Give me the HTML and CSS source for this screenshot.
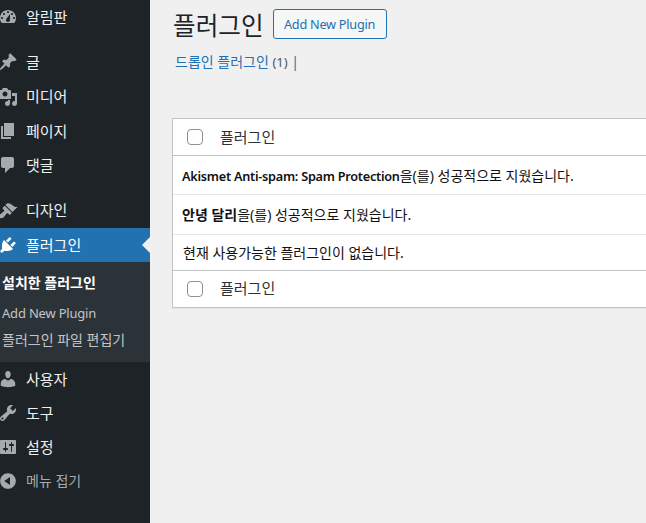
FILE: index.html
```html
<!DOCTYPE html>
<html lang="ko">
<head>
<meta charset="utf-8">
<title>플러그인</title>
<link rel="stylesheet" href="styles.css">
</head>
<body>
<div class="layout">
  <nav class="sidebar">
    <a class="item"><svg class="icon" viewBox="0 0 20 20"><path d="M3.76 16h12.48c1.1-1.37 1.76-3.11 1.76-5 0-4.42-3.58-8-8-8s-8 3.58-8 8c0 1.89.66 3.63 1.76 5zM10 4c.55 0 1 .45 1 1s-.45 1-1 1-1-.45-1-1 .45-1 1-1zM6 6c.55 0 1 .45 1 1s-.45 1-1 1-1-.45-1-1 .45-1 1-1zm8 0c.55 0 1 .45 1 1s-.45 1-1 1-1-.45-1-1 .45-1 1-1zm-5.37 5.55L12 7v6c0 1.1-.9 2-2 2s-2-.9-2-2c0-.57.24-1.08.63-1.45zM4 10c.55 0 1 .45 1 1s-.45 1-1 1-1-.45-1-1 .45-1 1-1zm12 0c.55 0 1 .45 1 1s-.45 1-1 1-1-.45-1-1 .45-1 1-1z"/></svg><span class="label">알림판</span></a>
    <div class="group">
      <a class="item"><svg class="icon" viewBox="0 0 20 20"><path d="M10.44 3.02l1.82-1.82 6.36 6.35-1.83 1.82c-1.05-.68-2.48-.57-3.41.36l-.75.75c-.92.93-1.04 2.35-.35 3.41l-1.83 1.82-2.41-2.41-2.8 2.79c-.42.42-3.38 2.71-3.8 2.29s1.86-3.39 2.28-3.81l2.79-2.79L4.1 9.36l1.83-1.82c1.05.69 2.48.57 3.4-.36l.75-.75c.93-.92 1.05-2.35.36-3.41z"/></svg><span class="label">글</span></a>
      <a class="item"><svg class="icon" viewBox="0 0 20 20"><path d="M13 11V4c0-.55-.45-1-1-1h-1.67L9 1H5L3.67 3H2c-.55 0-1 .45-1 1v7c0 .55.45 1 1 1h10c.55 0 1-.45 1-1zM7 4.5c1.38 0 2.5 1.12 2.5 2.5S8.38 9.5 7 9.5 4.5 8.38 4.5 7 5.62 4.5 7 4.5zM14 6h5v10.5c0 1.38-1.12 2.5-2.5 2.5S14 17.88 14 16.5s1.12-2.5 2.5-2.5c.17 0 .34.02.5.05V9h-3V6zm-4 8.05V13h2v3.5c0 1.38-1.12 2.5-2.5 2.5S7 17.88 7 16.5 8.12 14 9.5 14c.17 0 .34.02.5.05z"/></svg><span class="label">미디어</span></a>
      <a class="item"><svg class="icon" viewBox="0 0 20 20"><path d="M6 15V2h10v13H6zm-1 1h8v2H3V5h2v11z"/></svg><span class="label">페이지</span></a>
      <a class="item"><svg class="icon" viewBox="0 0 20 20"><path d="M5 2h9c1.1 0 2 .9 2 2v7c0 1.1-.9 2-2 2h-2l-5 5v-5H5c-1.1 0-2-.9-2-2V4c0-1.1.9-2 2-2z"/></svg><span class="label">댓글</span></a>
    </div>
    <div class="group">
      <a class="item"><svg class="icon" viewBox="0 0 20 20"><path d="M14.48 11.06L7.41 3.99l1.5-1.5c.5-.56 2.3-.47 3.51.32 1.21.8 1.43 1.28 2.91 2.1 1.18.64 2.45 1.26 4.45.85zm-.71.71L6.7 4.7 4.93 6.47c-.39.39-.39 1.02 0 1.41l1.06 1.06c.39.39.39 1.03 0 1.42-.6.6-1.43 1.11-2.21 1.69-.35.26-.7.53-1.01.84C1.43 13.23.5 15.12 1.24 16.4c.31.5.85.84 1.44.85 1.08.02 2.4-.56 3.47-1.6.31-.31.58-.66.84-1.01.58-.78 1.09-1.61 1.69-2.21.39-.39 1.03-.39 1.42 0l1.06 1.06c.39.39 1.02.39 1.41 0z"/></svg><span class="label">디자인</span></a>
      <a class="item current"><svg class="icon" viewBox="0 0 20 20"><path d="M13.11 4.36L9.87 7.6 8 5.73l3.24-3.24c.35-.34 1.05-.2 1.56.32.52.51.66 1.21.31 1.55zm-8 1.77l.91-1.12 9.01 9.01-1.19.84c-.71.71-2.63 1.16-3.82 1.16H6.14L4.9 17.26c-.59.59-1.54.59-2.12 0-.59-.58-.59-1.53 0-2.12l1.24-1.24v-3.88c0-1.13.4-3.19 1.09-3.89zm7.26 3.97l3.24-3.24c.34-.35 1.04-.21 1.55.31.52.51.66 1.21.31 1.55l-3.24 3.25z"/></svg><span class="label">플러그인</span></a>
    </div>
    <div class="submenu">
      <a class="sub-active">설치한 플러그인</a>
      <a class="sub-latin">Add New Plugin</a>
      <a>플러그인 파일 편집기</a>
    </div>
    <a class="item"><svg class="icon" viewBox="0 0 20 20"><path d="M10 9.25c-2.27 0-2.73-3.44-2.73-3.44C7 4.02 7.82 2 9.97 2c2.16 0 2.98 2.02 2.71 3.81 0 0-.41 3.44-2.68 3.44zm0 2.57L12.72 10c2.39 0 4.52 2.33 4.52 4.53v2.49s-3.65 1.13-7.24 1.13c-3.65 0-7.24-1.13-7.24-1.13v-2.49c0-2.25 1.94-4.48 4.47-4.48z"/></svg><span class="label">사용자</span></a>
    <a class="item"><svg class="icon" viewBox="0 0 20 20"><path d="M16.68 9.77c-1.34 1.34-3.3 1.67-4.95.99l-5.41 6.52c-.99.99-2.59.99-3.58 0s-.99-2.59 0-3.57l6.52-5.42c-.68-1.65-.35-3.61.99-4.95 1.28-1.28 3.12-1.62 4.72-1.06l-2.89 2.89 2.82 2.82 2.86-2.87c.53 1.58.18 3.39-1.08 4.65zM3.81 16.21c.4.39 1.04.39 1.43 0 .4-.4.4-1.04 0-1.43-.39-.4-1.03-.4-1.43 0-.39.39-.39 1.03 0 1.43z"/></svg><span class="label">도구</span></a>
    <a class="item"><svg class="icon" viewBox="0 0 20 20"><path d="M18 16V4c0-.55-.45-1-1-1H3c-.55 0-1 .45-1 1v12c0 .55.45 1 1 1h14c.55 0 1-.45 1-1zM8 11h1c.55 0 1 .45 1 1s-.45 1-1 1H8v1.5c0 .28-.22.5-.5.5s-.5-.22-.5-.5V13H6c-.55 0-1-.45-1-1s.45-1 1-1h1V5.5c0-.28.22-.5.5-.5s.5.22.5.5V11zm5-2h-1c-.55 0-1-.45-1-1s.45-1 1-1h1V5.5c0-.28.22-.5.5-.5s.5.22.5.5V7h1c.55 0 1 .45 1 1s-.45 1-1 1h-1v5.5c0 .28-.22.5-.5.5s-.5-.22-.5-.5V9z" fill-rule="evenodd"/></svg><span class="label">설정</span></a>
    <a class="item collapse"><svg class="icon" viewBox="0 0 20 20"><path d="M10 2.16c4.33 0 7.84 3.51 7.84 7.84s-3.51 7.84-7.84 7.84S2.16 14.33 2.16 10 5.71 2.16 10 2.16zm2 11.72V6.12L6.18 9.97z"/></svg><span class="label">메뉴 접기</span></a>
  </nav>
  <main class="main">
    <header class="head">
      <h1>플러그인</h1>
      <a class="btn latin">Add New Plugin</a>
    </header>
    <p class="filters"><a>드롭인 플러그인</a> <span class="count">(1)</span> <span class="sep">|</span></p>
    <div class="panel">
      <div class="row head-row"><span class="check"></span><span class="label">플러그인</span></div>
      <div class="row msg line-a"><p><strong class="latin">Akismet Anti-spam: Spam Protection</strong>을(를) 성공적으로 지웠습니다.</p></div>
      <div class="row msg line-b"><p><strong>안녕 달리</strong>을(를) 성공적으로 지웠습니다.</p></div>
      <div class="row msg line-c"><p>현재 사용가능한 플러그인이 없습니다.</p></div>
      <div class="row foot-row"><span class="check"></span><span class="label label-up">플러그인</span></div>
    </div>
  </main>
</div>
</body>
</html>
```
FILE: styles.css
```css
* { box-sizing: border-box; }
html, body { margin: 0; height: 100%; overflow: hidden; }
body {
  background: #f0f0f1;
  color: #1d2327;
  font-family: "Noto Sans", "Noto Sans CJK KR", sans-serif;
  font-size: 14px;
}
p, h1 { margin: 0; }
.latin { font-size: 12.7px; letter-spacing: -0.25px; }

.layout { display: flex; height: 523px; }

.sidebar {
  width: 150px;
  flex: none;
  background: #1d2327;
  overflow: hidden;
  color: #f0f0f1;
  font-size: 15px;
}
.group { padding-top: 11.3px; }
.item {
  display: flex;
  align-items: center;
  height: 34px;
  gap: 8px;
  position: relative;
}
.group .item { height: 34.3px; }
.label { position: relative; top: -1px; }
.label-up { top: -2px; }
.icon {
  width: 20px;
  height: 20px;
  flex: none;
  margin-left: -2px;
  fill: #a7aaad;
}
.group .current { background: #2271b1; color: #fff; height: 34px; }
.current .icon { fill: #fff; }
.current::after {
  content: "";
  position: absolute;
  right: 0;
  top: 50%;
  margin-top: -8px;
  border: 8px solid transparent;
  border-right-color: #f0f0f1;
  border-left-width: 0;
}
.submenu {
  display: flex;
  flex-direction: column;
  height: 100px;
  padding: 7px 0 0 2px;
  background: #2c3338;
  color: #c3c4c7;
  font-size: 14px;
}
.submenu a { height: 28.5px; line-height: 28px; }
.submenu .sub-latin { font-size: 13px; letter-spacing: -0.2px; line-height: 30px; }
.sub-active { color: #fff; font-weight: 700; }
.collapse { color: #a7aaad; font-size: 14px; }

.main { flex: 1; min-width: 0; padding-left: 22px; }
.head {
  display: flex;
  align-items: center;
  gap: 9px;
  height: 48px;
  padding-left: 1px;
}
h1 { font-size: 24.6px; font-weight: 400; }
.btn {
  display: flex;
  align-items: center;
  height: 30px;
  padding: 0 10.5px;
  border: 1px solid #2271b1;
  border-radius: 3px;
  background: #f6f7f7;
  color: #2271b1;
}
.filters {
  height: 70px;
  padding: 5px 0 0 3px;
  line-height: 18px;
  color: #50575e;
}
.filters a { color: #2271b1; }
.count { font-size: 13px; }
.sep { color: #2271b1; }

.panel {
  width: 520px;
  background: #fff;
  border: 1px solid #c3c4c7;
  box-shadow: 0 1px 1px rgba(0, 0, 0, .04);
}
.row { display: flex; align-items: center; }
.head-row, .foot-row {
  gap: 17px;
  padding-left: 14px;
  font-size: 15px;
  color: #2c3338;
}
.head-row { height: 37px; border-bottom: 1px solid #c3c4c7; }
.foot-row { height: 37px; border-top: 1px solid #c3c4c7; }
.check {
  width: 16px;
  height: 16px;
  background: #fff;
  border: 1px solid #8c8f94;
  border-radius: 4px;
}
.msg { padding-left: 9px; color: #111; }
.msg strong { font-weight: 600; }
.line-a { height: 39px; border-bottom: 1px solid #e5e5e5; }
.line-b { height: 40px; padding-bottom: 2px; border-bottom: 1px solid #e5e5e5; }
.line-c { height: 35px; padding-left: 10px; padding-bottom: 2px; }
```
